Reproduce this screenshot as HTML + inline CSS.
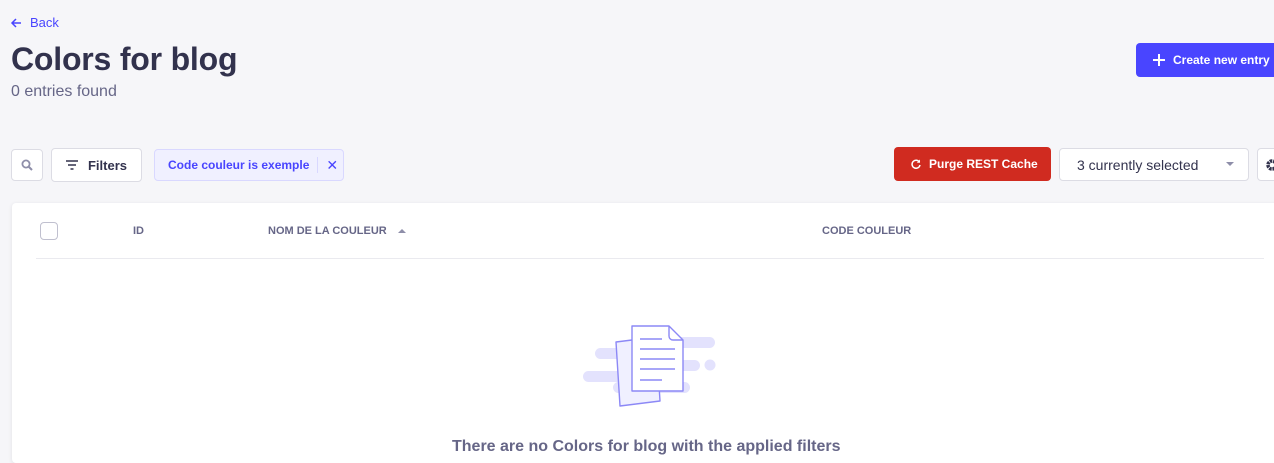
<!DOCTYPE html>
<html><head><style>
*{box-sizing:border-box;margin:0;padding:0}
body{width:1274px;height:443px;overflow:hidden;background:#f6f6f9;font-family:"Liberation Sans",sans-serif;position:relative;color:#32324d}
.a{position:absolute}
.btn{position:absolute;background:#fff;border:1px solid #dcdce4;border-radius:4px;display:flex;align-items:center;justify-content:center;font-size:13px;font-weight:bold}
</style></head><body>
<div class="a" style="left:10px;top:15px;color:#4945ff;font-size:13px;display:flex;align-items:center;gap:8px">
<svg width="12" height="12" viewBox="0 0 12 12"><path d="M11 6H2M6 2L2 6l4 4" stroke="#4945ff" stroke-width="1.5" fill="none"/></svg>Back</div>
<div class="a" style="left:11px;top:41px;font-size:32px;font-weight:bold;color:#32324d;letter-spacing:-0.2px">Colors for blog</div>
<div class="a" style="left:11px;top:83px;font-size:16px;color:#666687">0 entries found</div>
<div class="a" style="left:1136px;top:43px;width:150px;height:34px;background:#4945ff;border-radius:4px;color:#fff;font-size:12px;font-weight:bold;display:flex;align-items:center;padding-left:17px;gap:8px">
<svg width="12" height="12" viewBox="0 0 12 12"><path d="M6 0v12M0 6h12" stroke="#fff" stroke-width="2"/></svg>Create new entry</div>

<div class="btn" style="left:11px;top:149px;width:32px;height:32px"><svg width="12" height="12" viewBox="0 0 12 12"><circle cx="5" cy="5" r="3.6" stroke="#8e8ea9" stroke-width="1.8" fill="none"/><path d="M7.5 7.5L11 11" stroke="#8e8ea9" stroke-width="2"/></svg></div>
<div class="btn" style="left:51px;top:148px;width:91px;height:34px;gap:10px"><svg width="12" height="10" viewBox="0 0 12 10"><path d="M0 1h12M2 5h8M4.5 9h3" stroke="#32324d" stroke-width="1.6"/></svg>Filters</div>
<div class="btn" style="left:154px;top:149px;width:190px;height:32px;background:#f0f0ff;border-color:#d9d8ff;color:#4945ff;font-size:12px;justify-content:flex-start;padding-left:13px">Code couleur is exemple<span style="display:inline-block;width:1px;height:16px;background:#d9d8ff;margin:0 8px"></span><span style="font-weight:normal;font-size:14px">✕</span></div>

<div class="a" style="left:894px;top:147px;width:157px;height:34px;background:#d02b20;border-radius:4px;color:#fff;font-size:12px;font-weight:bold;display:flex;align-items:center;padding-left:17px;gap:8px">
<svg width="10" height="10" viewBox="0 0 10 10"><path d="M8.5 3.2A4 4 0 1 0 9 6" stroke="#fff" stroke-width="1.5" fill="none"/><path d="M9 0.5v3.2H5.8" fill="#fff"/></svg>Purge REST Cache</div>
<div class="btn" style="left:1059px;top:148px;width:190px;height:33px;font-weight:normal;font-size:14px;justify-content:flex-start;padding-left:17px">3 currently selected<span style="position:absolute;right:14px;top:13px;border:4px solid transparent;border-top:4px solid #8e8ea9;border-bottom:0"></span></div>
<div class="btn" style="left:1257px;top:148px;width:40px;height:33px;justify-content:flex-start;padding-left:8px"><svg width="12" height="12" viewBox="0 0 12 12"><circle cx="6" cy="6" r="4" stroke="#32324d" stroke-width="3.5" fill="none" stroke-dasharray="2.5 0.8"/></svg></div>

<div class="a" style="left:12px;top:203px;width:1280px;height:260px;background:#fff;border-radius:4px;box-shadow:0 1px 4px rgba(33,33,52,.1)"></div>
<div class="a" style="left:40px;top:222px;width:18px;height:18px;border:1px solid #c0c0cf;border-radius:4px;background:#fff"></div>
<div class="a" style="left:133px;top:225px;font-size:11px;font-weight:bold;color:#666687">ID</div>
<div class="a" style="left:268px;top:225px;font-size:11px;font-weight:bold;color:#666687">NOM DE LA COULEUR <span style="display:inline-block;margin-left:8px;border:4px solid transparent;border-bottom:4px solid #8e8ea9;border-top:0;vertical-align:middle"></span></div>
<div class="a" style="left:822px;top:225px;font-size:11px;font-weight:bold;color:#666687">CODE COULEUR</div>
<div class="a" style="left:36px;top:258px;width:1228px;height:1px;background:#eaeaef"></div>

<svg class="a" style="left:580px;top:320px" width="140" height="95" viewBox="0 0 140 95">
<g fill="#e3e2fd"><rect x="15" y="28" width="50" height="11" rx="5.5"/><rect x="3" y="51" width="50" height="11" rx="5.5"/><rect x="90" y="17" width="45" height="11" rx="5.5"/><rect x="90" y="40" width="30" height="11" rx="5.5"/><circle cx="130" cy="45" r="5.5"/><rect x="33" y="62" width="77" height="11" rx="5.5"/></g>
<path d="M36 22l40-5 4 64-40 5z" fill="#f0f0ff" stroke="#8c88f6" stroke-width="1.4" stroke-linejoin="round"/>
<path d="M52 6h37l14 14v51h-51z" fill="#fff" stroke="#8c88f6" stroke-width="1.4" stroke-linejoin="round"/>
<path d="M89 6v10a4 4 0 0 0 4 4h10" fill="none" stroke="#8c88f6" stroke-width="1.4"/>
<path d="M60 19h22M60 29h35M60 39h35M60 49h35M60 60h22" stroke="#8c88f6" stroke-width="1.4"/>
</svg>
<div class="a" style="left:452px;top:438px;font-size:16px;font-weight:bold;color:#666687">There are no Colors for blog with the applied filters</div>
</body></html>
